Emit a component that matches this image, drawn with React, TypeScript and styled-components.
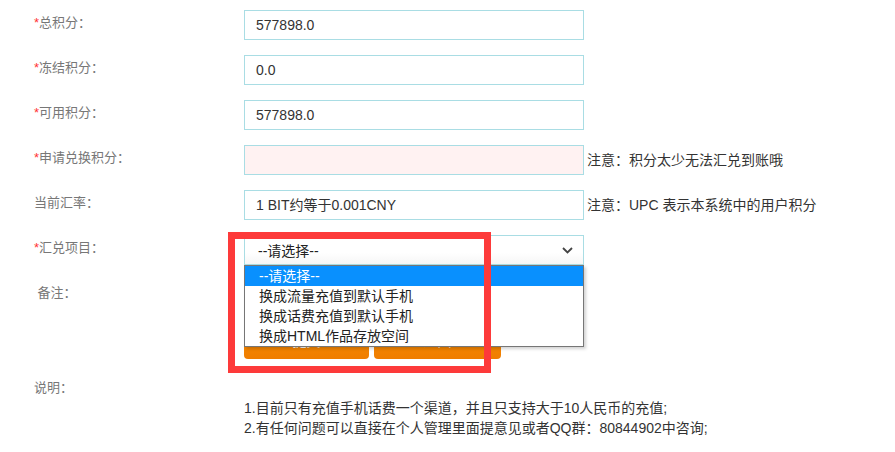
import styled, { createGlobalStyle } from 'styled-components'

const GlobalStyle = createGlobalStyle`
  body {
    margin: 0;
    background: #fff;
    font-family: "Liberation Sans", "Noto Sans CJK SC", sans-serif;
    color: #333;
  }
`

const Form = styled.div`
  display: flex;
  flex-direction: column;
  gap: 15px;
  padding: 10px 0 0 34px;
`

const Row = styled.div`
  display: grid;
  grid-template-columns: 210px 340px auto;
  align-items: start;
`

const Label = styled.div`
  font-size: 13px;
  line-height: 20px;
  padding-top: 3px;
  color: #777;
  white-space: pre;
`

const Star = styled.span`
  color: #f33;
`

const Input = styled.div<{ $warn?: boolean }>`
  box-sizing: border-box;
  height: 30px;
  border: 1px solid #a9dde4;
  background: ${(p) => (p.$warn ? '#fff2f2' : '#fff')};
  padding: 0 11px;
  font-size: 14px;
  line-height: 28px;
  color: #333;
`

const Note = styled.div`
  padding-left: 3px;
  font-size: 14px;
  line-height: 30px;
  color: #333;
  white-space: nowrap;
`

const SelectWrap = styled.div`
  position: relative;
`

const SelectBox = styled.div`
  box-sizing: border-box;
  height: 30px;
  border: 1px solid #a9dde4;
  background: linear-gradient(#fff 60%, #f6f6f6);
  padding: 0 10px 0 13px;
  display: flex;
  align-items: center;
  justify-content: space-between;
  font-size: 14px;
  color: #222;
`

const Options = styled.ul`
  position: absolute;
  z-index: 2;
  top: 100%;
  left: 0;
  right: 0;
  margin: 0;
  padding: 0;
  list-style: none;
  background: #fff;
  border: 1px solid #767676;
  box-shadow: 2px 2px 3px rgba(0, 0, 0, 0.18);
`

const Option = styled.li<{ $active?: boolean }>`
  height: 20px;
  line-height: 20px;
  padding-left: 14px;
  font-size: 14px;
  color: ${(p) => (p.$active ? '#fff' : '#222')};
  background: ${(p) => (p.$active ? '#0990fe' : 'transparent')};
`

const Highlight = styled.div`
  position: absolute;
  z-index: 3;
  left: -16px;
  top: -3px;
  width: 263px;
  height: 141px;
  box-sizing: border-box;
  border: 7px solid #fd3a3a;
  pointer-events: none;
`

const TextArea = styled.div`
  box-sizing: border-box;
  height: 32px;
  border: 1px solid #a9dde4;
`

const Buttons = styled.div`
  display: flex;
  gap: 5px;
  grid-column: 2 / 4;
`

const Button = styled.button<{ $wide?: boolean }>`
  width: ${(p) => (p.$wide ? '127px' : '125px')};
  height: 32px;
  padding: 0 0 6px;
  border: none;
  border-radius: 4px;
  background: linear-gradient(#fb9000, #ef7d00);
  color: #fff;
  font-family: inherit;
  font-size: 14px;
`

const Explain = styled.div`
  display: grid;
  grid-template-columns: 210px auto;
  margin-top: 1px;
`

const Lines = styled.div`
  grid-column: 2;
  grid-row: 2;
  font-size: 14px;
  line-height: 20px;
  color: #333;
`

const Chevron = () => (
  <svg width="11" height="7" viewBox="0 0 11 7">
    <path d="M1 1l4.5 4.5L10 1" fill="none" stroke="#444" strokeWidth="1.8" />
  </svg>
)

const fields = [
  { label: '总积分：', value: '577898.0', star: true },
  { label: '冻结积分：', value: '0.0', star: true },
  { label: '可用积分：', value: '577898.0', star: true },
  { label: '申请兑换积分：', value: '', star: true, warn: true, note: '注意：积分太少无法汇兑到账哦' },
  { label: '当前汇率：', value: '1 BIT约等于0.001CNY', note: '注意：UPC 表示本系统中的用户积分' },
]

const options = ['--请选择--', '换成流量充值到默认手机', '换成话费充值到默认手机', '换成HTML作品存放空间']

export default function App() {
  return (
    <>
      <GlobalStyle />
      <Form>
        {fields.map((f) => (
          <Row key={f.label}>
            <Label>
              {f.star && <Star>*</Star>}
              {f.label}
            </Label>
            <Input $warn={f.warn}>{f.value}</Input>
            {f.note && <Note>{f.note}</Note>}
          </Row>
        ))}
        <Row>
          <Label>
            <Star>*</Star>汇兑项目：
          </Label>
          <SelectWrap>
            <SelectBox>
              <span>--请选择--</span>
              <Chevron />
            </SelectBox>
            <Options>
              {options.map((o, i) => (
                <Option key={o} $active={i === 0}>
                  {o}
                </Option>
              ))}
            </Options>
            <Highlight />
          </SelectWrap>
        </Row>
        <Row>
          <Label> 备注：</Label>
          <TextArea />
        </Row>
        <Row>
          <Buttons>
            <Button>提交</Button>
            <Button $wide>返回</Button>
          </Buttons>
        </Row>
        <Explain>
          <Label>说明：</Label>
          <Lines>
            <div>1.目前只有充值手机话费一个渠道，并且只支持大于10人民币的充值;</div>
            <div>2.有任何问题可以直接在个人管理里面提意见或者QQ群：80844902中咨询;</div>
          </Lines>
        </Explain>
      </Form>
    </>
  )
}
